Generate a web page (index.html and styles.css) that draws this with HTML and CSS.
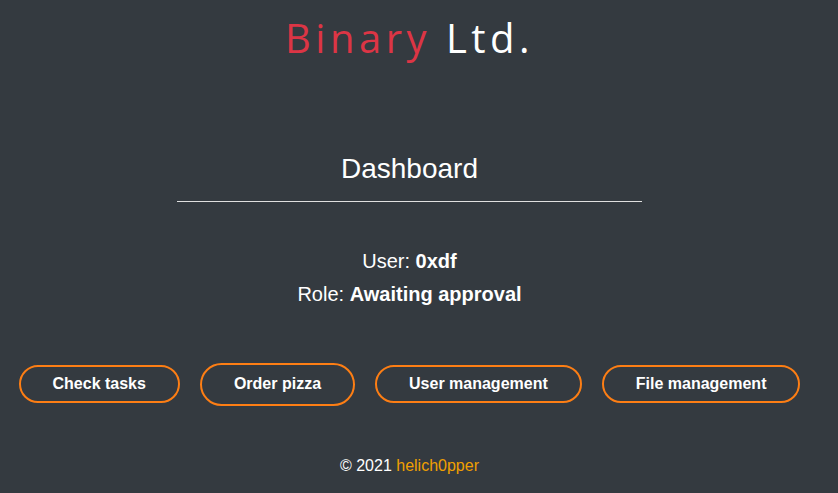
FILE: index.html
```html
<!DOCTYPE html>
<html lang="en">
<head>
<meta charset="utf-8">
<title>Binary Ltd. - Dashboard</title>
<link rel="stylesheet" href="styles.css">
</head>
<body>
<div class="page">
  <h1 class="brand"><span class="brand-red">Binary</span> Ltd.</h1>
  <h2 class="heading">Dashboard</h2>
  <hr class="rule">
  <div class="info">
    <p class="info-line">User: <b>0xdf</b></p>
    <p class="info-line">Role: <b>Awaiting approval</b></p>
  </div>
  <div class="actions">
    <button class="btn">Check tasks</button>
    <button class="btn btn-focus">Order pizza</button>
    <button class="btn">User management</button>
    <button class="btn">File management</button>
  </div>
  <footer class="footer">© 2021 <span class="author">helich0pper</span></footer>
</div>
</body>
</html>
```
FILE: styles.css
```css
html, body {
  margin: 0;
  padding: 0;
  background: #343a40;
  color: #ffffff;
  font-family: "Liberation Sans", Arial, sans-serif;
}
.page {
  width: 819px;
  text-align: center;
  display: flex;
  flex-direction: column;
  align-items: center;
}
.brand {
  margin: 14px 0 0;
  font-family: "Open Sans", sans-serif;
  font-weight: 400;
  font-size: 40px;
  line-height: 48px;
  letter-spacing: 4.5px;
  color: #ffffff;
}
.brand-red {
  color: #dc3545;
}
.heading {
  margin: 90px 0 0;
  font-weight: 400;
  font-size: 28px;
  line-height: 34px;
}
.rule {
  width: 465px;
  margin: 15px 0 0;
  border: 0;
  border-top: 1px solid #e0e0e0;
  height: 0;
}
.info {
  margin-top: 43px;
}
.info-line {
  margin: 0;
  font-size: 20px;
  line-height: 33px;
}
.actions {
  margin-top: 51px;
  display: flex;
  gap: 20px;
  justify-content: center;
  align-items: center;
  height: 44px;
}
.btn {
  background: transparent;
  color: #ffffff;
  font-family: "Liberation Sans", Arial, sans-serif;
  font-weight: 700;
  font-size: 16px;
  height: 38px;
  padding: 0 32px;
  border: 2px solid #fd7e14;
  border-radius: 20px;
}
.btn-focus {
  height: 43px;
  border-radius: 22px;
}
.footer {
  margin-top: 50px;
  font-size: 16px;
  line-height: 20px;
}
.author {
  color: #f0a000;
}
```
